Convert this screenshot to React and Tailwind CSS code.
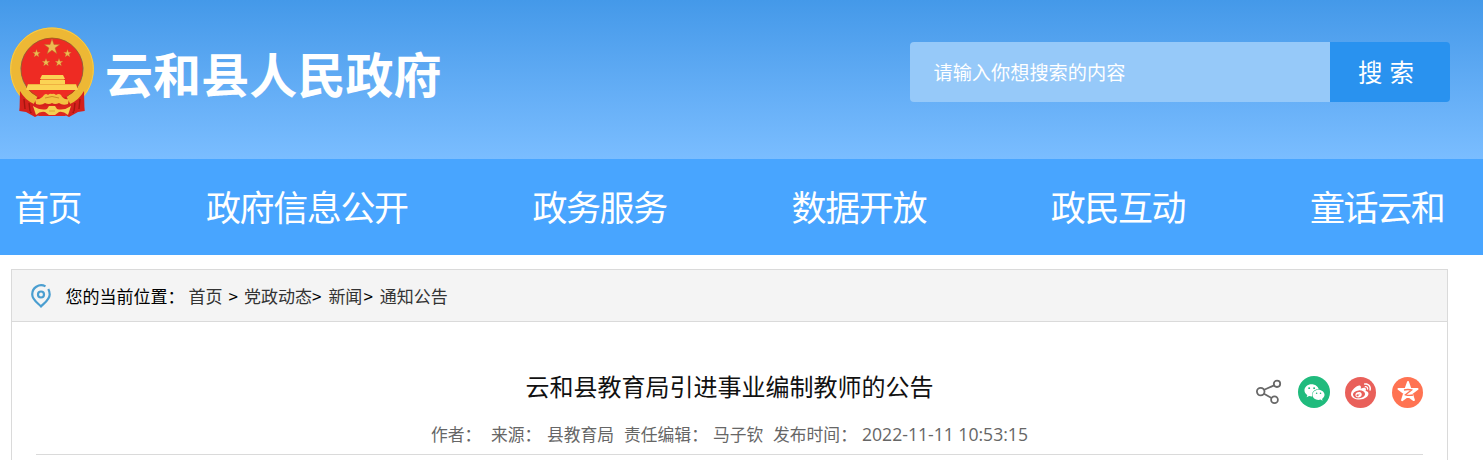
import { FaWeixin, FaWeibo } from "react-icons/fa";

const navItems = [
  "首页",
  "政府信息公开",
  "政务服务",
  "数据开放",
  "政民互动",
  "童话云和",
];

const star = "M0 -10 L2.4 -3.1 L9.5 -3.1 L3.8 1.2 L5.9 8.1 L0 4 L-5.9 8.1 L-3.8 1.2 L-9.5 -3.1 L-2.4 -3.1 Z";

const Emblem = () => (
  <svg className="w-[84px] h-[91px] shrink-0" viewBox="0 0 84 91">
    <path d="M12 60 Q11 74 9.5 84 L16 85 L25 90 L29 88 H55 L59 90 L68 85 L74.5 84 Q73 73 72 60 Z" fill="#d5211c" />
    <path d="M14 74 L15 83 M19 78 L21 86 M70 74 L69 83 M65 78 L63 86" stroke="#a5160f" strokeWidth="1.6" />
    <circle cx="42" cy="42" r="31" fill="#ee2b23" />
    <path d="M25 74.5 A36.5 36.5 0 1 1 59 74.5" fill="none" stroke="#edb835" strokeWidth="10.5" />
    <path d="M24 79.500 A41.3 41.3 0 1 1 60 79.500" fill="none" stroke="#f7cc4a" strokeWidth="1" />
    <path d="M27 69.2 A31 31 0 1 1 57 69.2" fill="none" stroke="#a8561a" strokeWidth="0.9" />
    <path d="M10 64 Q15 73 24 77 L23 85 L16 83 L9.500 84 Z M74 64 Q69 73 60 77 L61 85 L68 83 L74.500 84 Z" fill="#d5211c" />
    <path d="M14 72 L15 82 M19 76 L20 84 M70 72 L69 82 M65 76 L64 84" stroke="#a5160f" strokeWidth="1.4" />
    <g fill="#edbc52" stroke="#b96422" strokeWidth="0.6">
      <path d={star} transform="translate(42 20) scale(.82)" />
      <path d={star} transform="translate(26.5 26.5) scale(.42)" />
      <path d={star} transform="translate(57.5 26.5) scale(.42)" />
      <path d={star} transform="translate(36 35.5) scale(.43)" />
      <path d={star} transform="translate(49 35.5) scale(.43)" />
    </g>
    <path d="M32 48 H53 L55 52 H30 Z M30 53 H55 V57 H66 L68 63 H16 L18 57 H30 Z" fill="#fbd354" />
    <path d="M31 52.5 H54 M18 57.5 H66" stroke="#e9a23a" strokeWidth="0.7" />
    <path d="M25 72 Q31 73 34 68 Q36 66 38 68 Q40 66 42 67 Q44 66 46 68 Q49 66 51 68 Q53 73 59 72 L58 77 Q53 79 49 76 Q45 78 42 76 Q39 78 35 76 Q31 79 26 77 Z" fill="#f3c142" />
    <path d="M35 71 q7 -3 14 0" fill="none" stroke="#c98520" strokeWidth="0.9" />
    <path d="M26 78 Q34 81 42 77.5 Q50 81 58 78 L61 85 L55 89 H29 L23 85 Z" fill="#dd261e" />
    <path d="M23 79 q8 5 14 3 l2 -3 h6 l2 3 q7 2 14 -3 l-3 9 q-5 -4 -9 -3 l-4 3 h-6 l-4 -3 q-5 -1 -9 3 Z" fill="#f5d052" />
    <path d="M39 84 h6" stroke="#d99a2a" strokeWidth="0.8" />
  </svg>
);

const LocationIcon = () => (
  <svg className="w-5 h-6 shrink-0" viewBox="0 0 20 24" fill="none" stroke="#4a9ed0" strokeWidth="2.2">
    <path d="M14.5 2.4 A8.9 8.9 0 0 0 1.3 11 C1.3 15.5 6 18.5 10 22.4 C14 18.5 18.7 15.5 18.7 10.5 Q18.7 7.6 17.3 5" />
    <circle cx="10" cy="10.5" r="3" />
  </svg>
);

const ShareIcon = () => (
  <svg className="w-[26px] h-[26px] mr-4" viewBox="0 0 26 26" fill="none" stroke="#686868" strokeWidth="1.8">
    <circle cx="4.7" cy="12.6" r="3.8" />
    <circle cx="21" cy="4.8" r="3.2" />
    <circle cx="18.5" cy="20.8" r="3.4" />
    <path d="M8.2 10.8 L18 6.4 M8 14.8 L15.5 19" />
  </svg>
);

const QzoneIcon = () => (
  <svg className="w-[26px] h-[26px]" viewBox="-13 -13 26 26">
    <path d={star} fill="#fff" stroke="#fff" strokeWidth="2" strokeLinejoin="round" />
    <path d="M-4 -2 Q0 -3 3.6 -2 L-2.5 2.8 Q1 3.8 5 3" fill="none" stroke="#ff7352" strokeWidth="1.3" />
  </svg>
);

export default function App() {
  return (
    <div className="h-[460px] overflow-hidden bg-white whitespace-nowrap font-['Noto_Sans_CJK_SC',sans-serif]">
      <header className="h-[159px] bg-linear-to-b from-[#4499e9] to-[#7abdff] flex items-start justify-between pl-[10px] pr-[33px]">
        <div className="flex items-center pt-[27px]">
          <Emblem />
          <h1 className="ml-[11px] -mt-[2px] text-[48px] leading-[60px] tracking-[0.1px] font-bold text-white">云和县人民政府</h1>
        </div>
        <div className="mt-[42px] flex h-[60px] w-[540px] overflow-hidden rounded text-white">
          <div className="flex flex-1 items-center bg-[#96c9f9] pl-[23.5px] text-[19.2px]">
            <span className="pt-px">请输入你想搜索的内容</span>
          </div>
          <button className="w-[120px] bg-[#2992ef] pr-2 text-[24.5px] [word-spacing:1.5px]">搜 索</button>
        </div>
      </header>

      <nav className="flex h-24 items-center gap-[124.8px] bg-[#48a5ff] pl-[14px] pb-[2px] text-[35px] tracking-[-1.4px] text-white">
        {navItems.map((item) => (
          <a key={item}>{item}</a>
        ))}
      </nav>

      <main className="ml-[11px] mt-[14px] h-[220px] w-[1437px] border border-[#dadada]">
        <div className="flex h-[52px] items-center border-b border-[#dadada] bg-[#f4f4f4] pl-[19px] text-[17px] text-[#333]">
          <LocationIcon />
          <span className="ml-[14.5px] w-[123px] text-black">您的当前位置：</span>
          <a>首页</a>
          <span className="mx-[6px] text-black">&gt;</span>
          <a>党政动态</a>
          <span className="mr-[7px] text-black">&gt;</span>
          <a>新闻</a>
          <span className="ml-px mr-[7px] text-black">&gt;</span>
          <a>通知公告</a>
        </div>

        <div className="relative mx-6 h-[133px] border-b border-[#dadada] text-center">
          <h2 className="pt-[46px] text-[24px] leading-9 text-[#111]">云和县教育局引进事业编制教师的公告</h2>
          <div className="mt-[15px] ml-[1px] flex justify-center text-[16.8px] leading-[30px] text-[#666]">
            <span className="w-[60px] text-left">作者：</span>
            <span className="w-[56px] text-left">来源：</span>
            <span className="w-[77px] text-left">县教育局</span>
            <span className="w-[89px] text-left">责任编辑：</span>
            <span className="w-[60px] text-left">马子钦</span>
            <span className="w-[89px] text-left">发布时间：</span>
            <span className="w-[167px] text-left text-[17.6px] font-['Open_Sans',sans-serif]">2022-11-11 10:53:15</span>
          </div>
          <div className="absolute right-0 top-[54px] flex items-center">
            <ShareIcon />
            <span className="mr-[15px] flex size-8 items-center justify-center rounded-full bg-[#20bb7d] text-white">
              <FaWeixin size={21} />
            </span>
            <span className="mr-[16px] flex size-[31px] items-center justify-center rounded-full bg-[#e9605a] text-white">
              <FaWeibo size={20} />
            </span>
            <span className="flex size-[31px] items-center justify-center rounded-full bg-[#ff7352]">
              <QzoneIcon />
            </span>
          </div>
        </div>
      </main>
    </div>
  );
}
